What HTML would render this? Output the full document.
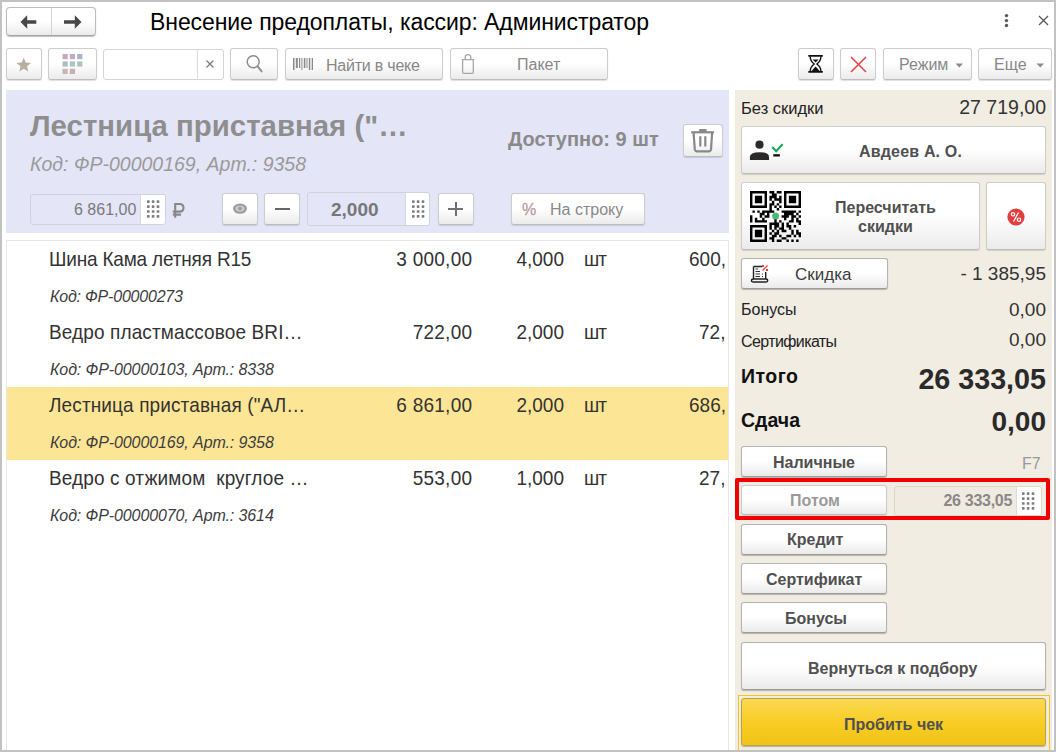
<!DOCTYPE html>
<html><head><meta charset="utf-8">
<style>
*{box-sizing:border-box;margin:0;padding:0}
html,body{width:1056px;height:752px;overflow:hidden;background:#fff}
body{position:relative;font-family:"Liberation Sans",sans-serif;color:#333}
.a{position:absolute}
.t{position:absolute;white-space:nowrap;line-height:1}
.r{text-align:right}
.btn{position:absolute;border:1px solid #b4b4b4;border-bottom-color:#9c9c9c;border-radius:3px;background:linear-gradient(#fff 0%,#fff 48%,#ebebeb 100%);box-shadow:0 1px 1px rgba(0,0,0,.25)}
.btn.lt{border-color:#cdcdcd;border-bottom-color:#bdbdbd;box-shadow:0 1px 1px rgba(0,0,0,.13)}
.fld{position:absolute;border:1px solid #d4d4d4;border-radius:3px}
.bt{position:absolute;white-space:nowrap;line-height:1;font-size:16px;font-weight:bold;color:#505050}
.g{position:absolute;background:#fff}
#frame{position:absolute;left:0;top:0;width:1056px;height:752px;border:2px solid #c2c2c2;pointer-events:none;z-index:50}
.row .t{color:#333;top:9px}
.row .nm{left:42px;letter-spacing:-0.18px}
.row .t:not(.kd){transform:scaleY(1.07);transform-origin:0 16px}
.row .kd{left:43px;top:48px;font-size:16px;font-style:italic;letter-spacing:-0.2px;color:#3d3d3d}
</style></head><body>
<div id="frame"></div>

<!-- header -->
<div class="btn" style="left:6px;top:7px;width:90px;height:29px;border-radius:4px;border-color:#bcbcbc;border-bottom-color:#a4a4a4"></div>
<div class="a" style="left:51px;top:8px;width:1px;height:27px;background:#d4d4d4"></div>
<svg class="a" style="left:19px;top:14px" width="20" height="16" viewBox="0 0 20 16"><path d="M1.5 8 L8.2 1.3 L8.2 6.2 L17.3 6.2 L17.3 9.8 L8.2 9.8 L8.2 14.7 Z" fill="#474747"/></svg>
<svg class="a" style="left:63px;top:14px" width="20" height="16" viewBox="0 0 20 16"><path d="M18.5 8 L11.8 1.3 L11.8 6.2 L1 6.2 L1 9.8 L11.8 9.8 L11.8 14.7 Z" fill="#474747"/></svg>
<div class="t" style="left:150px;top:11px;font-size:23px;letter-spacing:-0.08px;color:#000">Внесение предоплаты, кассир: Администратор</div>
<svg class="a" style="left:1003px;top:12px" width="7" height="18"><circle cx="3.5" cy="3.6" r="1.7" fill="#555"/><circle cx="3.5" cy="8.6" r="1.7" fill="#555"/><circle cx="3.5" cy="13.5" r="1.7" fill="#555"/></svg>
<svg class="a" style="left:1038px;top:15px" width="11" height="11"><path d="M1 1 L10 10 M10 1 L1 10" stroke="#555" stroke-width="1.3"/></svg>

<!-- toolbar -->
<div class="btn lt" style="left:6px;top:48px;width:36px;height:32px"></div>
<svg class="a" style="left:16px;top:56.5px" width="15.5" height="15.5" viewBox="0 0 24 24"><path d="M12 1 L15.1 8.6 L23.3 9.2 L17 14.4 L19 22.4 L12 18 L5 22.4 L7 14.4 L0.7 9.2 L8.9 8.6 Z" fill="#b7afa2"/></svg>
<div class="btn lt" style="left:48px;top:48px;width:49px;height:32px"></div>
<svg class="a" style="left:62px;top:54px" width="22" height="21">
<rect x="0.5" y="0" width="5.2" height="5.2" fill="#c8aab6"/><rect x="7.8" y="0" width="5.2" height="5.2" fill="#c2abc7"/><rect x="15.2" y="0" width="5.2" height="5.2" fill="#abb2ca"/>
<rect x="0.5" y="7.4" width="5.2" height="5.2" fill="#abbcc9"/><rect x="7.8" y="7.4" width="5.2" height="5.2" fill="#abc5c5"/><rect x="15.2" y="7.4" width="5.2" height="5.2" fill="#abc4b8"/>
<rect x="0.5" y="14.8" width="5.2" height="5.2" fill="#c6b8aa"/><rect x="7.8" y="14.8" width="5.2" height="5.2" fill="#c6b1b1"/>
</svg>
<div class="fld" style="left:103px;top:49px;width:121px;height:31px"></div>
<div class="a" style="left:197px;top:50px;width:1px;height:29px;background:#dcdcdc"></div>
<svg class="a" style="left:205px;top:59px" width="10" height="10"><path d="M1.5 1.5 L8.5 8.5 M8.5 1.5 L1.5 8.5" stroke="#777" stroke-width="1.2"/></svg>
<div class="btn lt" style="left:230px;top:48px;width:48px;height:32px"></div>
<svg class="a" style="left:244px;top:53px" width="20" height="21"><circle cx="9.2" cy="8.8" r="6" fill="none" stroke="#8c8c8c" stroke-width="1.5"/><path d="M13.5 13.2 L17.6 18.4" stroke="#8c8c8c" stroke-width="1.9" stroke-linecap="round"/></svg>
<div class="btn lt" style="left:285px;top:48px;width:158px;height:32px"></div>
<svg class="a" style="left:293px;top:57px" width="21" height="14"><g fill="#8a8a8a"><rect x="0" y="1" width="1.5" height="12"/><rect x="2.8" y="1" width="2" height="10"/><rect x="6" y="1" width="1.2" height="10"/><rect x="8.4" y="1" width="1" height="12"/><rect x="10.8" y="1" width="1.6" height="10"/><rect x="13.5" y="1" width="1" height="10"/><rect x="15.8" y="1" width="1.5" height="12"/><rect x="18.7" y="1" width="1.3" height="12"/></g></svg>
<div class="t" style="left:326px;top:58px;font-size:16px;letter-spacing:-0.22px;color:#888">Найти в чеке</div>
<div class="btn lt" style="left:450px;top:48px;width:158px;height:32px"></div>
<svg class="a" style="left:460px;top:53px" width="16" height="22"><path d="M2.6 6.6 H13.3 V19.2 Q13.3 20.4 12.1 20.4 H3.8 Q2.6 20.4 2.6 19.2 Z" fill="none" stroke="#a6a6a6" stroke-width="1.3"/><path d="M5.2 6.6 V4.5 Q5.2 1.6 8 1.6 Q10.8 1.6 10.8 4.5 V6.6" fill="none" stroke="#a6a6a6" stroke-width="1.3"/></svg>
<div class="t" style="left:517px;top:57px;font-size:16px;color:#888">Пакет</div>
<div class="btn lt" style="left:798px;top:48px;width:36px;height:32px"></div>
<svg class="a" style="left:807px;top:54px" width="17" height="20" viewBox="0 0 17 20"><path d="M1.3 1.9 H15.8 M1.3 17.9 H15.8" stroke="#111" stroke-width="1.8"/><path d="M3.2 2.5 Q3.2 7 7.2 10 Q3.2 13 3.2 17.3 M13.9 2.5 Q13.9 7 9.9 10 Q13.9 13 13.9 17.3" fill="none" stroke="#111" stroke-width="1.4"/><path d="M5.6 5.4 H11.6 L8.6 8.4 Z" fill="#111"/><path d="M8.6 12.6 L12.9 17.2 H4.3 Z" fill="#111"/></svg>
<div class="btn lt" style="left:840px;top:48px;width:36px;height:32px"></div>
<svg class="a" style="left:850px;top:56px" width="17" height="17"><path d="M1 1 L16 16 M16 1 L1 16" stroke="#e64545" stroke-width="1.6"/></svg>
<div class="btn lt" style="left:883px;top:48px;width:89px;height:32px"></div>
<div class="t" style="left:899px;top:57px;font-size:16px;color:#888">Режим</div>
<svg class="a" style="left:955px;top:63px" width="9" height="5"><path d="M0.5 0.5 H8 L4.25 4.5 Z" fill="#8a8a8a"/></svg>
<div class="btn lt" style="left:978px;top:48px;width:74px;height:32px"></div>
<div class="t" style="left:994px;top:57px;font-size:16px;color:#888">Еще</div>
<svg class="a" style="left:1036px;top:63px" width="9" height="5"><path d="M0.5 0.5 H8 L4.25 4.5 Z" fill="#8a8a8a"/></svg>

<!-- lavender panel -->
<div class="a" style="left:6px;top:90px;width:723px;height:143px;background:#e5e5f8"></div>
<div class="t" style="left:30px;top:110.5px;font-size:29.4px;font-weight:bold;color:#8e8e8e">Лестница приставная ("…</div>
<div class="t" style="left:30px;top:155px;font-size:19.5px;font-style:italic;color:#9a9a9a">Код: ФР-00000169, Арт.: 9358</div>
<div class="t" style="left:508px;top:129px;font-size:20px;font-weight:bold;color:#8a8a8a">Доступно: 9 шт</div>
<div class="btn lt" style="left:683px;top:124px;width:40px;height:33px"></div>
<svg class="a" style="left:690px;top:128px" width="26" height="26"><g fill="none" stroke="#888" stroke-width="2.2"><path d="M1.2 4.3 H24"/><path d="M3.6 5 L4.8 21.4 Q5.1 23.3 7 23.3 H18.8 Q20.7 23.3 21 21.4 L22.1 5"/><path d="M10.3 8.2 V18.6 M15.3 8.2 V18.6"/></g><rect x="9.2" y="1" width="7.4" height="3.4" fill="#888"/></svg>

<div class="fld" style="left:30px;top:194px;width:136px;height:31px;border-color:#d2d2dc"></div>
<div class="g" style="left:140px;top:195px;width:25px;height:29px;border-left:1px solid #d8d8d8;border-radius:0 2px 2px 0"></div>
<svg class="a" style="left:146px;top:199px" width="14" height="20"><g fill="#7e7e7e"><rect x="0.95" y="1.25" width="2.7" height="2.7" rx="0.7"/><rect x="5.75" y="1.25" width="2.7" height="2.7" rx="0.7"/><rect x="10.65" y="1.25" width="2.7" height="2.7" rx="0.7"/><rect x="0.95" y="6.25" width="2.7" height="2.7" rx="0.7"/><rect x="5.75" y="6.25" width="2.7" height="2.7" rx="0.7"/><rect x="10.65" y="6.25" width="2.7" height="2.7" rx="0.7"/><rect x="0.95" y="11.15" width="2.7" height="2.7" rx="0.7"/><rect x="5.75" y="11.15" width="2.7" height="2.7" rx="0.7"/><rect x="10.65" y="11.15" width="2.7" height="2.7" rx="0.7"/><rect x="0.95" y="16.05" width="2.7" height="2.7" rx="0.7"/><rect x="5.75" y="16.05" width="2.7" height="2.7" rx="0.7"/><rect x="10.65" y="16.05" width="2.7" height="2.7" rx="0.7"/></g></svg>
<div class="t" style="left:74px;top:202px;font-size:16px;color:#7a7a7a">6 861,00</div>
<svg class="a" style="left:171px;top:201px" width="14" height="19"><path d="M4.2 2 V16.8 M4.2 3 H8.6 Q12.5 3 12.5 6.8 Q12.5 10.6 8.6 10.6 H1.8 M1.8 13.6 H10" fill="none" stroke="#888" stroke-width="2.1"/></svg>
<div class="btn lt" style="left:222px;top:193px;width:36px;height:32px"></div>
<svg class="a" style="left:232px;top:203px" width="16" height="12"><ellipse cx="8" cy="5.6" rx="7" ry="5.2" fill="#9b9b9b"/><ellipse cx="8" cy="5.6" rx="4.6" ry="3.2" fill="#c9c9c9"/><circle cx="8" cy="5.6" r="1.8" fill="#9b9b9b"/></svg>
<div class="btn lt" style="left:264px;top:193px;width:36px;height:32px"></div>
<div class="a" style="left:275px;top:208px;width:15px;height:2px;background:#666"></div>
<div class="fld" style="left:307px;top:192px;width:123px;height:34px;border-color:#d2d2dc"></div>
<div class="g" style="left:405px;top:193px;width:24px;height:32px;border-left:1px solid #d8d8d8;border-radius:0 2px 2px 0"></div>
<svg class="a" style="left:411px;top:199px" width="14" height="20"><g fill="#7e7e7e"><rect x="0.95" y="1.25" width="2.7" height="2.7" rx="0.7"/><rect x="5.75" y="1.25" width="2.7" height="2.7" rx="0.7"/><rect x="10.65" y="1.25" width="2.7" height="2.7" rx="0.7"/><rect x="0.95" y="6.25" width="2.7" height="2.7" rx="0.7"/><rect x="5.75" y="6.25" width="2.7" height="2.7" rx="0.7"/><rect x="10.65" y="6.25" width="2.7" height="2.7" rx="0.7"/><rect x="0.95" y="11.15" width="2.7" height="2.7" rx="0.7"/><rect x="5.75" y="11.15" width="2.7" height="2.7" rx="0.7"/><rect x="10.65" y="11.15" width="2.7" height="2.7" rx="0.7"/><rect x="0.95" y="16.05" width="2.7" height="2.7" rx="0.7"/><rect x="5.75" y="16.05" width="2.7" height="2.7" rx="0.7"/><rect x="10.65" y="16.05" width="2.7" height="2.7" rx="0.7"/></g></svg>
<div class="t" style="left:331px;top:200px;font-size:19px;font-weight:bold;color:#777">2,000</div>
<div class="btn lt" style="left:438px;top:193px;width:36px;height:32px"></div>
<div class="a" style="left:448px;top:208px;width:15px;height:2px;background:#707070"></div>
<div class="a" style="left:454.5px;top:202px;width:2px;height:14px;background:#707070"></div>
<div class="btn lt" style="left:511px;top:193px;width:134px;height:32px"></div>
<div class="t" style="left:522px;top:202px;font-size:16px;color:#b89c9c;-webkit-text-stroke:0.3px #b89c9c">%</div>
<div class="t" style="left:550px;top:202px;font-size:16px;color:#888">На строку</div>

<!-- table -->
<div class="a" style="left:6px;top:240px;width:723px;height:520px;border:1px solid #e8e8e8;border-bottom:none;overflow:hidden">
 <div class="a" style="left:0;top:146px;width:721px;height:73px;background:#fde596"></div>
 <div class="row">
  <div class="t nm" style="font-size:19px">Шина Кама летняя R15</div>
  <div class="t kd">Код: ФР-00000273</div>
  <div class="t r" style="left:365px;width:100.3px;font-size:19px;letter-spacing:0.25px">3 000,00</div>
  <div class="t r" style="left:457px;width:100px;font-size:19px">4,000</div>
  <div class="t" style="left:577px;font-size:19px;letter-spacing:-1px">шт</div>
  <div class="a" style="left:660px;top:0;width:59.3px;height:40px;overflow:hidden"><div class="t" style="left:22px;font-size:19px">600,00</div></div>
 </div>
 <div class="row" style="position:absolute;left:0;top:73px;width:721px">
  <div class="t nm" style="font-size:19px;letter-spacing:0.12px">Ведро пластмассовое BRI…</div>
  <div class="t kd" style="letter-spacing:-0.1px">Код: ФР-00000103, Арт.: 8338</div>
  <div class="t r" style="left:365px;width:100.3px;font-size:19px;letter-spacing:0.25px">722,00</div>
  <div class="t r" style="left:457px;width:100px;font-size:19px">2,000</div>
  <div class="t" style="left:577px;font-size:19px;letter-spacing:-1px">шт</div>
  <div class="a" style="left:660px;top:0;width:59.3px;height:40px;overflow:hidden"><div class="t" style="left:32px;font-size:19px">72,20</div></div>
 </div>
 <div class="row" style="position:absolute;left:0;top:146px;width:721px">
  <div class="t nm" style="font-size:19px;letter-spacing:0.12px">Лестница приставная ("АЛ…</div>
  <div class="t kd" style="letter-spacing:-0.1px">Код: ФР-00000169, Арт.: 9358</div>
  <div class="t r" style="left:365px;width:100.3px;font-size:19px;letter-spacing:0.25px">6 861,00</div>
  <div class="t r" style="left:457px;width:100px;font-size:19px">2,000</div>
  <div class="t" style="left:577px;font-size:19px;letter-spacing:-1px">шт</div>
  <div class="a" style="left:660px;top:0;width:59.3px;height:40px;overflow:hidden"><div class="t" style="left:22px;font-size:19px">686,10</div></div>
 </div>
 <div class="row" style="position:absolute;left:0;top:219px;width:721px">
  <div class="t nm" style="font-size:19px;letter-spacing:0.12px">Ведро с отжимом&nbsp; круглое …</div>
  <div class="t kd" style="letter-spacing:-0.1px">Код: ФР-00000070, Арт.: 3614</div>
  <div class="t r" style="left:365px;width:100.3px;font-size:19px;letter-spacing:0.25px">553,00</div>
  <div class="t r" style="left:457px;width:100px;font-size:19px">1,000</div>
  <div class="t" style="left:577px;font-size:19px;letter-spacing:-1px">шт</div>
  <div class="a" style="left:660px;top:0;width:59.3px;height:40px;overflow:hidden"><div class="t" style="left:32px;font-size:19px">27,65</div></div>
 </div>
</div>
<!-- right panel -->
<div class="a" style="left:735px;top:90px;width:317px;height:662px;background:#f1ede2"></div>
<div class="t" style="left:741px;top:100px;font-size:16.5px;color:#222">Без скидки</div>
<div class="t r" style="left:846px;width:200px;top:98px;font-size:19.5px;color:#333">27 719,00</div>

<div class="btn lt" style="left:741px;top:126px;width:305px;height:48px"></div>
<svg class="a" style="left:749px;top:139px" width="36" height="22"><circle cx="10.5" cy="5.7" r="4.1" fill="#2a2a2a"/><path d="M0.9 21.1 V18 Q0.9 13.2 10.5 13.2 Q20 13.2 20 18 V21.1 Z" fill="#2a2a2a"/><path d="M23.2 8 L27.2 12.3 L33.6 5.3" fill="none" stroke="#17a757" stroke-width="2.1"/><rect x="24.3" y="15.2" width="6.6" height="2.3" fill="#111"/></svg>
<div class="bt" style="left:859px;top:144px;letter-spacing:0.18px">Авдеев А. О.</div>

<div class="btn lt" style="left:741px;top:182px;width:239px;height:68px"></div>
<svg class="a" style="left:750px;top:191px" width="51" height="51" viewBox="0 0 21 21" fill="#000"><path d="M0 0h7v1h-7zM8 0h2v1h-2zM11 0h2v1h-2zM14 0h7v1h-7zM0 1h1v1h-1zM6 1h1v1h-1zM9 1h2v1h-2zM14 1h1v1h-1zM20 1h1v1h-1zM0 2h1v1h-1zM2 2h3v1h-3zM6 2h1v1h-1zM8 2h3v1h-3zM12 2h1v1h-1zM14 2h1v1h-1zM16 2h3v1h-3zM20 2h1v1h-1zM0 3h1v1h-1zM2 3h3v1h-3zM6 3h1v1h-1zM8 3h1v1h-1zM10 3h3v1h-3zM14 3h1v1h-1zM16 3h3v1h-3zM20 3h1v1h-1zM0 4h1v1h-1zM2 4h3v1h-3zM6 4h1v1h-1zM9 4h1v1h-1zM12 4h1v1h-1zM14 4h1v1h-1zM16 4h3v1h-3zM20 4h1v1h-1zM0 5h1v1h-1zM6 5h1v1h-1zM8 5h2v1h-2zM11 5h1v1h-1zM14 5h1v1h-1zM20 5h1v1h-1zM0 6h7v1h-7zM8 6h1v1h-1zM10 6h1v1h-1zM12 6h1v1h-1zM14 6h7v1h-7zM8 7h1v1h-1zM11 7h1v1h-1zM1 8h1v1h-1zM3 8h1v1h-1zM5 8h5v1h-5zM13 8h6v1h-6zM20 8h1v1h-1zM4 9h2v1h-2zM7 9h1v1h-1zM14 9h4v1h-4zM19 9h1v1h-1zM0 10h1v1h-1zM4 10h1v1h-1zM6 10h2v1h-2zM13 10h3v1h-3zM17 10h2v1h-2zM20 10h1v1h-1zM0 11h1v1h-1zM2 11h1v1h-1zM5 11h1v1h-1zM10 11h1v1h-1zM14 11h1v1h-1zM17 11h1v1h-1zM19 11h1v1h-1zM0 12h1v1h-1zM2 12h5v1h-5zM10 12h1v1h-1zM12 12h1v1h-1zM16 12h2v1h-2zM19 12h2v1h-2zM8 13h4v1h-4zM13 13h1v1h-1zM15 13h1v1h-1zM20 13h1v1h-1zM0 14h7v1h-7zM8 14h1v1h-1zM10 14h2v1h-2zM13 14h1v1h-1zM15 14h2v1h-2zM18 14h1v1h-1zM0 15h1v1h-1zM6 15h1v1h-1zM8 15h1v1h-1zM10 15h1v1h-1zM12 15h2v1h-2zM16 15h1v1h-1zM0 16h1v1h-1zM2 16h3v1h-3zM6 16h1v1h-1zM9 16h1v1h-1zM11 16h1v1h-1zM13 16h2v1h-2zM17 16h1v1h-1zM19 16h1v1h-1zM0 17h1v1h-1zM2 17h3v1h-3zM6 17h1v1h-1zM8 17h1v1h-1zM10 17h2v1h-2zM17 17h1v1h-1zM19 17h2v1h-2zM0 18h1v1h-1zM2 18h3v1h-3zM6 18h1v1h-1zM9 18h2v1h-2zM12 18h1v1h-1zM15 18h2v1h-2zM18 18h1v1h-1zM20 18h1v1h-1zM0 19h1v1h-1zM6 19h1v1h-1zM8 19h2v1h-2zM13 19h2v1h-2zM0 20h7v1h-7zM9 20h1v1h-1zM11 20h2v1h-2zM15 20h1v1h-1zM17 20h1v1h-1zM19 20h1v1h-1z"/></svg>
<svg class="a" style="left:771px;top:211px" width="9" height="9"><circle cx="4.6" cy="4.9" r="3.5" fill="#4cba7c"/></svg>
<div class="bt" style="left:835px;top:200px">Пересчитать</div>
<div class="bt" style="left:858px;top:219px">скидки</div>

<div class="btn lt" style="left:986px;top:182px;width:60px;height:68px"></div>
<svg class="a" style="left:1007px;top:208px" width="18" height="18"><circle cx="9" cy="9" r="8.6" fill="#e43d3d"/><path d="M11.5 4.5 L6.5 13.5" stroke="#fff" stroke-width="1.3"/><circle cx="6" cy="6.3" r="1.7" fill="none" stroke="#fff" stroke-width="1.2"/><circle cx="12" cy="11.7" r="1.7" fill="none" stroke="#fff" stroke-width="1.2"/></svg>

<div class="btn" style="left:741px;top:258px;width:147px;height:31px"></div>
<svg class="a" style="left:750px;top:264px" width="20" height="19"><path d="M3.5 2.5 H12 M3.5 2.5 V15 M15.7 8 V15" fill="none" stroke="#222" stroke-width="1.4"/><path d="M1.5 16.7 Q1.5 15 3.5 15 H15.7 Q17.7 15 17.7 16.7 Q17.7 18 15.7 18 H3.5 Q1.5 18 1.5 16.7 Z" fill="none" stroke="#222" stroke-width="1.4"/><path d="M5.5 5 H8 M5.5 7.5 H10 M5.5 10 H10 M5.5 12.5 H10 M12 10 H13 M12 12.5 H13" stroke="#333" stroke-width="1.1"/><path d="M12.5 6.5 L17.5 1.5" stroke="#e43d3d" stroke-width="1.1"/><rect x="12" y="1" width="2" height="2" fill="#e43d3d"/><rect x="16" y="5" width="2" height="2" fill="#e43d3d"/></svg>
<div class="t" style="left:795px;top:265.5px;font-size:17px;color:#3c3c3c">Скидка</div>
<div class="t r" style="left:846px;width:200px;top:264px;font-size:19px;color:#333">- 1 385,95</div>

<div class="t" style="left:741px;top:302px;font-size:16px;color:#222">Бонусы</div>
<div class="t r" style="left:846px;width:200px;top:300px;font-size:19px;color:#333">0,00</div>
<div class="t" style="left:741px;top:333.5px;font-size:16px;letter-spacing:-0.6px;color:#222">Сертификаты</div>
<div class="t r" style="left:846px;width:200px;top:330px;font-size:19px;color:#333">0,00</div>
<div class="t" style="left:741px;top:367px;font-size:19.5px;letter-spacing:0.5px;font-weight:bold;color:#111">Итого</div>
<div class="t r" style="left:846px;width:200px;top:365px;font-size:28.7px;font-weight:bold;color:#2a2a2a">26 333,05</div>
<div class="t" style="left:741px;top:411px;font-size:19.5px;font-weight:bold;color:#111">Сдача</div>
<div class="t r" style="left:846px;width:200px;top:408px;font-size:28px;font-weight:bold;color:#2a2a2a">0,00</div>

<div class="btn" style="left:741px;top:446px;width:146px;height:31px"></div>
<div class="bt" style="left:773px;top:455px">Наличные</div>
<div class="t" style="left:1022px;top:456px;font-size:16px;color:#999">F7</div>

<div class="a" style="left:735px;top:478px;width:315px;height:42px;border:4px solid #f10000;border-radius:2px"></div>
<div class="btn lt" style="left:741px;top:485px;width:146px;height:30px"></div>
<div class="bt" style="left:790px;top:493px;color:#9a9a9a">Потом</div>
<div class="fld" style="left:894px;top:486px;width:148px;height:30px;background:#efebe0;border-color:#dcd8cc"></div>
<div class="g" style="left:1016px;top:487px;width:25px;height:28px;border-left:1px solid #dcdcdc;border-radius:0 2px 2px 0"></div>
<svg class="a" style="left:1021px;top:491px" width="14" height="20"><g fill="#7e7e7e"><rect x="0.95" y="1.25" width="2.7" height="2.7" rx="0.7"/><rect x="5.75" y="1.25" width="2.7" height="2.7" rx="0.7"/><rect x="10.65" y="1.25" width="2.7" height="2.7" rx="0.7"/><rect x="0.95" y="6.25" width="2.7" height="2.7" rx="0.7"/><rect x="5.75" y="6.25" width="2.7" height="2.7" rx="0.7"/><rect x="10.65" y="6.25" width="2.7" height="2.7" rx="0.7"/><rect x="0.95" y="11.15" width="2.7" height="2.7" rx="0.7"/><rect x="5.75" y="11.15" width="2.7" height="2.7" rx="0.7"/><rect x="10.65" y="11.15" width="2.7" height="2.7" rx="0.7"/><rect x="0.95" y="16.05" width="2.7" height="2.7" rx="0.7"/><rect x="5.75" y="16.05" width="2.7" height="2.7" rx="0.7"/><rect x="10.65" y="16.05" width="2.7" height="2.7" rx="0.7"/></g></svg>
<div class="bt r" style="left:812px;width:200px;top:493px;letter-spacing:-0.3px;color:#888">26 333,05</div>

<div class="btn" style="left:741px;top:524px;width:146px;height:31px"></div>
<div class="bt" style="left:787px;top:532px">Кредит</div>
<div class="btn" style="left:741px;top:563px;width:146px;height:31px"></div>
<div class="bt" style="left:766px;top:572px">Сертификат</div>
<div class="btn" style="left:741px;top:602px;width:146px;height:31px"></div>
<div class="bt" style="left:785px;top:611px">Бонусы</div>

<div class="btn" style="left:741px;top:642px;width:305px;height:48px"></div>
<div class="bt" style="left:808px;top:660.5px">Вернуться к подбору</div>

<div class="a" style="left:738px;top:695px;width:312px;height:57px;border:1px solid #f5c518;border-bottom:none"></div>
<div class="btn" style="left:741px;top:698px;width:305px;height:48px;border-color:#b9a24a;background:linear-gradient(#fbd853 0%,#f8cc22 55%,#f0c218 100%)"></div>
<div class="bt" style="left:844px;top:717px">Пробить чек</div>
</body></html>
